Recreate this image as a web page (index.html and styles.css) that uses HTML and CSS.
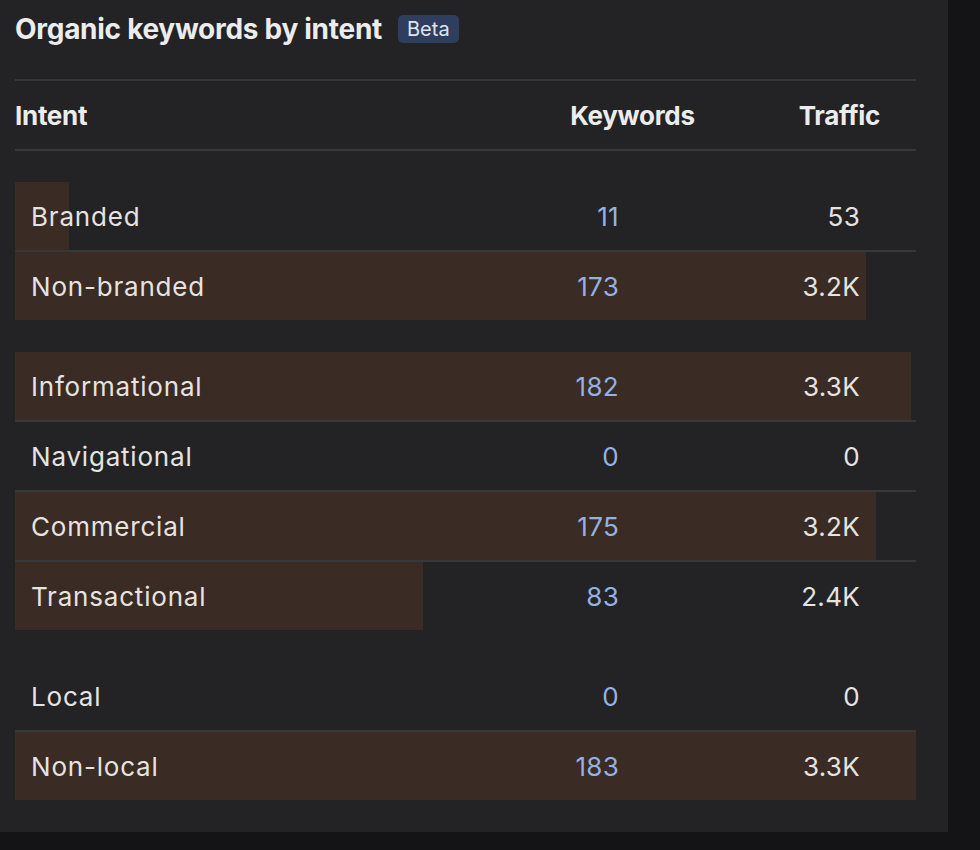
FILE: index.html
```html
<!DOCTYPE html>
<html lang="en">
<head>
<meta charset="utf-8">
<title>Organic keywords by intent</title>
<link rel="stylesheet" href="styles.css">
</head>
<body>
<section class="panel">
  <header class="title-row">
    <h2 class="title">Organic keywords by intent</h2>
    <span class="badge">Beta</span>
  </header>
  <div class="table">
    <div class="head">
      <span class="h-intent">Intent</span>
      <span class="h-kw">Keywords</span>
      <span class="h-tr">Traffic</span>
    </div>
    <div class="group">
      <div class="row" style="--w:6%"><span class="label">Branded</span><span class="kw">11</span><span class="tr">53</span></div>
      <div class="row" style="--w:94.5%"><span class="label">Non-branded</span><span class="kw">173</span><span class="tr">3.2K</span></div>
    </div>
    <div class="group">
      <div class="row" style="--w:99.5%"><span class="label">Informational</span><span class="kw">182</span><span class="tr">3.3K</span></div>
      <div class="row" style="--w:0%"><span class="label">Navigational</span><span class="kw">0</span><span class="tr">0</span></div>
      <div class="row" style="--w:95.6%"><span class="label">Commercial</span><span class="kw">175</span><span class="tr">3.2K</span></div>
      <div class="row" style="--w:45.3%"><span class="label">Transactional</span><span class="kw">83</span><span class="tr">2.4K</span></div>
    </div>
    <div class="group">
      <div class="row" style="--w:0%"><span class="label">Local</span><span class="kw">0</span><span class="tr">0</span></div>
      <div class="row" style="--w:100%"><span class="label">Non-local</span><span class="kw">183</span><span class="tr">3.3K</span></div>
    </div>
  </div>
</section>
</body>
</html>
```

FILE: styles.css
```css
html, body {
  margin: 0;
  padding: 0;
  background: #141416;
  height: 100%;
}
body {
  font-family: Inter, "Noto Sans", "Liberation Sans", sans-serif;
  color: #e6e3e1;
}
.panel {
  width: 948px;
  height: 832px;
  box-sizing: border-box;
  background: #232325;
  padding: 0 32px 0 15px;
}
.title-row {
  display: flex;
  align-items: center;
  gap: 16px;
  height: 79px;
  padding-bottom: 21px;
  box-sizing: border-box;
}
.title {
  margin: 0;
  font-size: 28px;
  font-weight: 700;
  color: #ececec;
  letter-spacing: -0.28px;
}
.badge {
  background: #2f3e5e;
  color: #dfe4ee;
  font-size: 20px;
  line-height: 28px;
  height: 28px;
  padding: 0 9px;
  border-radius: 5px;
}
.table {
  border-top: 2px solid #38383b;
}
.head {
  display: flex;
  align-items: center;
  height: 68px;
  border-bottom: 2px solid #38383b;
  font-size: 26px;
  font-weight: 700;
  color: #ececec;
  letter-spacing: -0.3px;
  margin-bottom: 31px;
}
.h-intent { flex: 1; }
.h-kw { margin-right: 104px; }
.h-tr { margin-right: 36px; }
.group + .group { margin-top: 32px; }
.row {
  display: grid;
  grid-template-columns: 1fr 200px 241px;
  align-items: center;
  height: 68px;
  padding: 0 56px 0 16px;
  font-size: 26px;
  letter-spacing: 0.3px;
  background: linear-gradient(to right, #3a2b24 var(--w), transparent var(--w));
}
.row + .row { border-top: 2px solid #38383b; }
.label {
  letter-spacing: 0.8px;
}
.kw {
  text-align: right;
  color: #93b2e2;
}
.tr {
  text-align: right;
}
```
